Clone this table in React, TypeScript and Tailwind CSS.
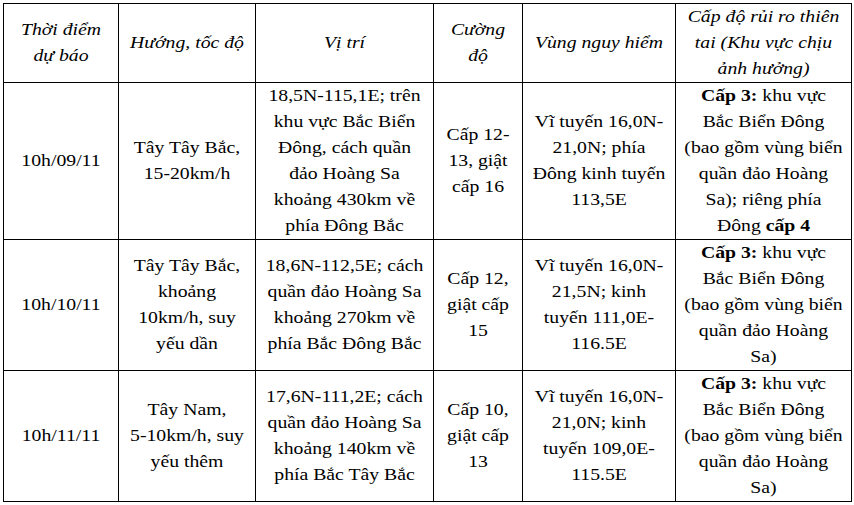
import React from "react";

const L = ({ lines }: { lines: React.ReactNode[] }) => (
  <>
    {lines.map((l, i) => (
      <div key={i} className="whitespace-nowrap scale-x-[1.16]">
        {l}
      </div>
    ))}
  </>
);

const td = "border border-black text-center align-middle p-0";

export default function App() {
  const rows: React.ReactNode[][][] = [
    [
      ["10h/09/11"],
      ["Tây Tây Bắc,", "15-20km/h"],
      [
        "18,5N-115,1E; trên",
        "khu vực Bắc Biển",
        "Đông, cách quần",
        "đảo Hoàng Sa",
        "khoảng 430km về",
        "phía Đông Bắc",
      ],
      ["Cấp 12-", "13, giật", "cấp 16"],
      ["Vĩ tuyến 16,0N-", "21,0N; phía", "Đông kinh tuyến", "113,5E"],
      [
        <>
          <b>Cấp 3:</b> khu vực
        </>,
        "Bắc Biển Đông",
        "(bao gồm vùng biển",
        "quần đảo Hoàng",
        "Sa); riêng phía",
        <>
          Đông <b>cấp 4</b>
        </>,
      ],
    ],
    [
      ["10h/10/11"],
      ["Tây Tây Bắc,", "khoảng", "10km/h, suy", "yếu dần"],
      [
        "18,6N-112,5E; cách",
        "quần đảo Hoàng Sa",
        "khoảng 270km về",
        "phía Bắc Đông Bắc",
      ],
      ["Cấp 12,", "giật cấp", "15"],
      ["Vĩ tuyến 16,0N-", "21,5N; kinh", "tuyến 111,0E-", "116.5E"],
      [
        <>
          <b>Cấp 3:</b> khu vực
        </>,
        "Bắc Biển Đông",
        "(bao gồm vùng biển",
        "quần đảo Hoàng",
        "Sa)",
      ],
    ],
    [
      ["10h/11/11"],
      ["Tây Nam,", "5-10km/h, suy", "yếu thêm"],
      [
        "17,6N-111,2E; cách",
        "quần đảo Hoàng Sa",
        "khoảng 140km về",
        "phía Bắc Tây Bắc",
      ],
      ["Cấp 10,", "giật cấp", "13"],
      ["Vĩ tuyến 16,0N-", "21,0N; kinh", "tuyến 109,0E-", "115.5E"],
      [
        <>
          <b>Cấp 3:</b> khu vực
        </>,
        "Bắc Biển Đông",
        "(bao gồm vùng biển",
        "quần đảo Hoàng",
        "Sa)",
      ],
    ],
  ];
  const heights = ["h-[157px]", "h-[131px]", "h-[130px]"];
  return (
    <div className="w-[854px] h-[505px] bg-white overflow-hidden pt-[3px] pl-[3px] text-black text-[17px] leading-[26px] font-['Liberation_Serif','Times_New_Roman',serif]">
      <table className="border-collapse table-fixed w-[848px]">
        <colgroup>
          <col className="w-[115px]" />
          <col className="w-[137px]" />
          <col className="w-[178px]" />
          <col className="w-[89px]" />
          <col className="w-[153px]" />
          <col className="w-[176px]" />
        </colgroup>
        <thead>
          <tr className="h-[77px] italic">
            <td className={td}>
              <L lines={["Thời điểm", "dự báo"]} />
            </td>
            <td className={td}>
              <L lines={["Hướng, tốc độ"]} />
            </td>
            <td className={td}>
              <L lines={["Vị trí"]} />
            </td>
            <td className={td}>
              <L lines={["Cường", "độ"]} />
            </td>
            <td className={td}>
              <L lines={["Vùng nguy hiểm"]} />
            </td>
            <td className={td}>
              <L lines={["Cấp độ rủi ro thiên", "tai (Khu vực chịu", "ảnh hưởng)"]} />
            </td>
          </tr>
        </thead>
        <tbody>
          {rows.map((r, i) => (
            <tr key={i} className={heights[i]}>
              {r.map((c, j) => (
                <td key={j} className={td}>
                  <L lines={c} />
                </td>
              ))}
            </tr>
          ))}
        </tbody>
      </table>
    </div>
  );
}
